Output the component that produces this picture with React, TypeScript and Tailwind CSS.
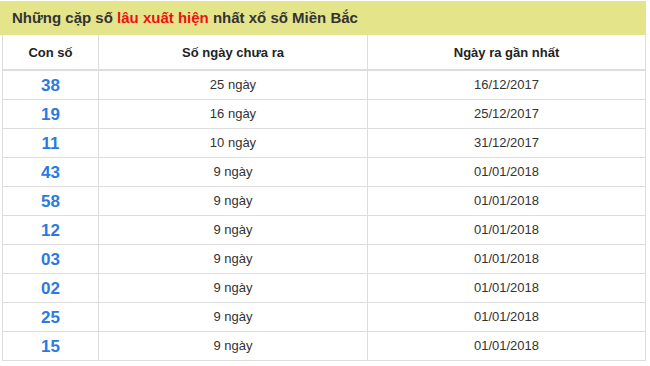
const rows = [
  { num: '38', days: '25 ngày', date: '16/12/2017' },
  { num: '19', days: '16 ngày', date: '25/12/2017' },
  { num: '11', days: '10 ngày', date: '31/12/2017' },
  { num: '43', days: '9 ngày', date: '01/01/2018' },
  { num: '58', days: '9 ngày', date: '01/01/2018' },
  { num: '12', days: '9 ngày', date: '01/01/2018' },
  { num: '03', days: '9 ngày', date: '01/01/2018' },
  { num: '02', days: '9 ngày', date: '01/01/2018' },
  { num: '25', days: '9 ngày', date: '01/01/2018' },
  { num: '15', days: '9 ngày', date: '01/01/2018' },
];

export default function App() {
  return (
    <div className="w-[650px] h-[366px] bg-white pt-px font-['Liberation_Sans',Arial,sans-serif] text-[#333]">
      <div className="w-[646px] h-[34px] bg-[#e4e48b] pl-3 flex items-center text-[15px] font-bold text-[#333]">
        Những cặp số&nbsp;<span className="text-[#f01010]">lâu xuất hiện</span>&nbsp;nhất xổ số Miền Bắc
      </div>
      <table className="ml-[2px] w-[644px] border-collapse table-fixed">
        <colgroup>
          <col className="w-[96px]" />
          <col className="w-[269px]" />
          <col />
        </colgroup>
        <thead>
          <tr className="h-[35px] border-b-2 border-[#ddd]">
            <th className="border-x border-[#ddd] pt-px text-[13px] font-bold text-[#222]">Con số</th>
            <th className="border-x border-[#ddd] pt-px text-[13px] font-bold text-[#222]">Số ngày chưa ra</th>
            <th className="border-x border-[#ddd] pt-px text-[13px] font-bold text-[#222]">Ngày ra gần nhất</th>
          </tr>
        </thead>
        <tbody>
          {rows.map((r, i) => (
            <tr key={i} className="h-[29px] border-b border-[#ddd]">
              <td className="border-x border-[#ddd] pt-[2px] text-center text-[17px] font-bold text-[#2a7ae2]">{r.num}</td>
              <td className="border-x border-[#ddd] text-center text-[13px] text-[#333]">{r.days}</td>
              <td className="border-x border-[#ddd] text-center text-[13px] text-[#333]">{r.date}</td>
            </tr>
          ))}
        </tbody>
      </table>
    </div>
  );
}
